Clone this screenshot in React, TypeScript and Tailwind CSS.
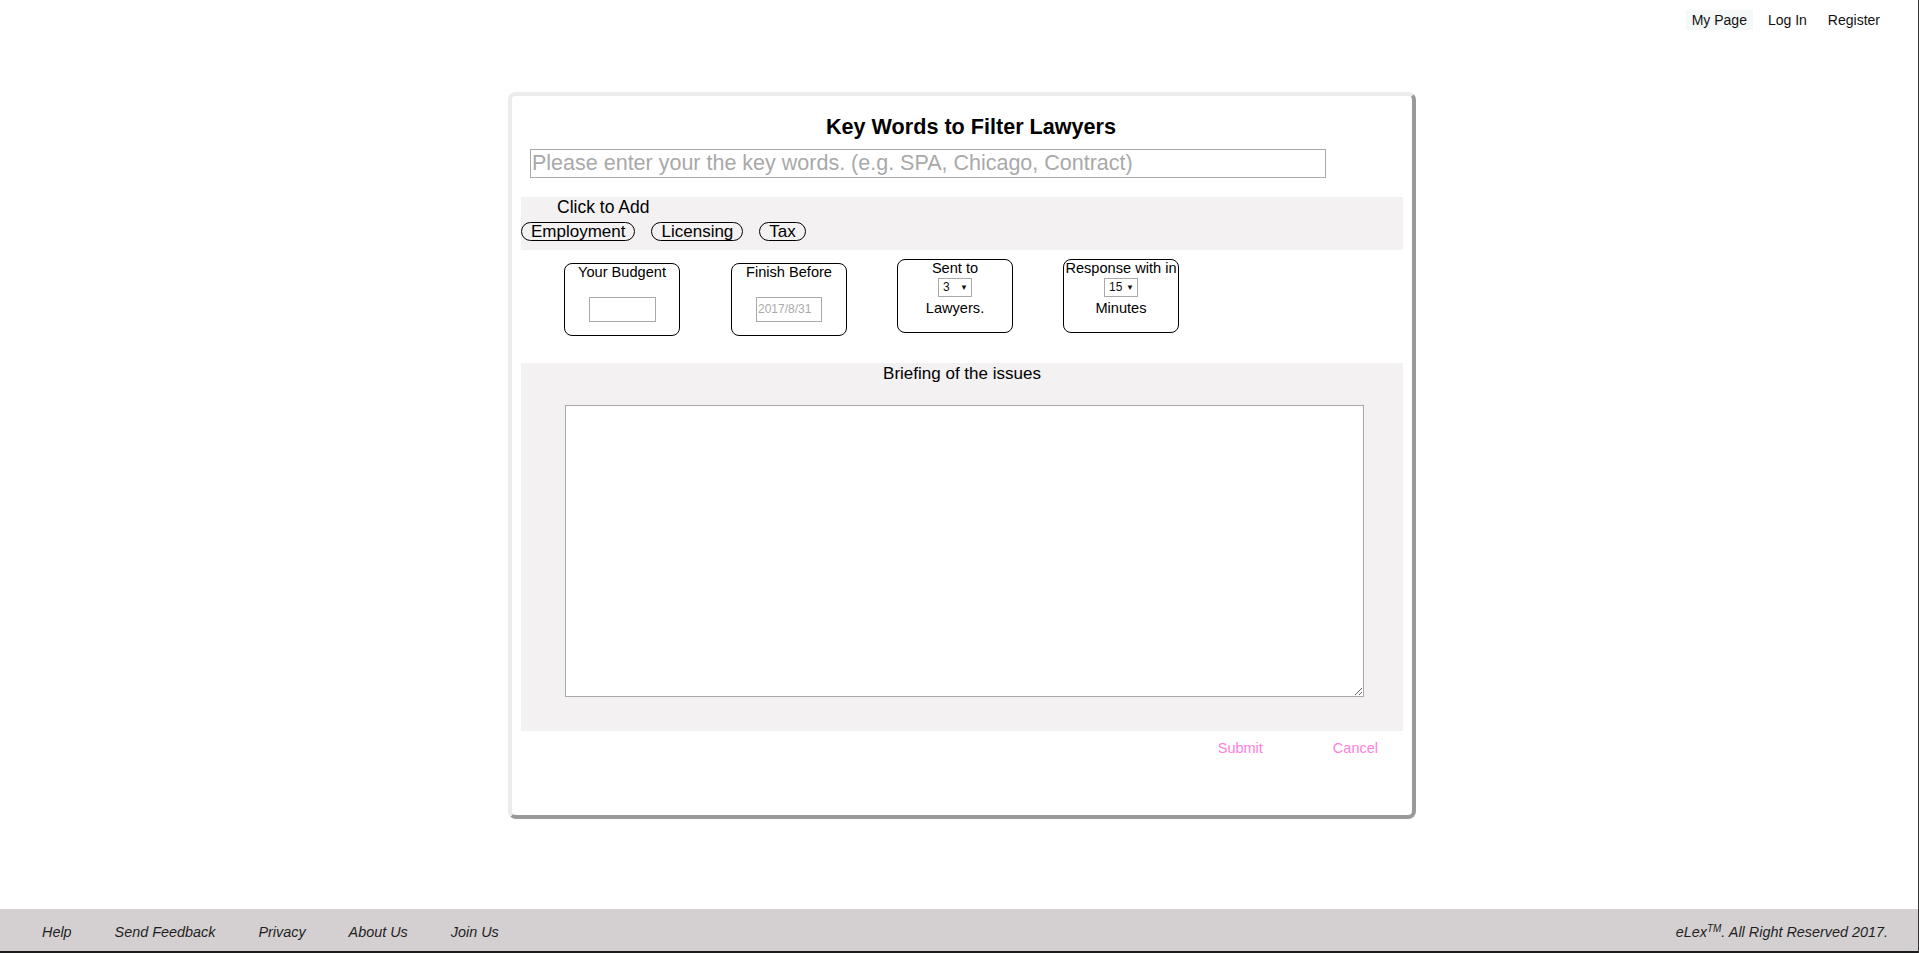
import React from "react";

function SelectBox({ value, w }: { value: string; w: string }) {
  return (
    <div
      className={`mx-auto flex h-[19px] ${w} items-center justify-between border border-[#a9a9a9] bg-white pl-[4px] pr-[3px] text-[12px] leading-[17px] text-[#111]`}
    >
      <span>{value}</span>
      <span className="text-[8px]">▼</span>
    </div>
  );
}

export default function App() {
  return (
    <div
      className="flex min-h-screen flex-col border-r border-[#333] bg-white text-black"
      style={{ fontFamily: '"Liberation Sans", Arial, sans-serif' }}
    >
      {/* top nav */}
      <div className="flex justify-end gap-[9px] pr-[32px] pt-[10px] text-[14px] leading-[20px] text-[#111]">
        <span className="bg-[#f4f8f6] px-[6px]">My Page</span>
        <span className="px-[6px]">Log In</span>
        <span className="px-[6px]">Register</span>
      </div>

      {/* card */}
      <div className="ml-[508px] mt-[62px] flex h-[727px] w-[908px] flex-col rounded-[8px] border-4 border-b-[#999] border-l-[#ececec] border-r-[#999] border-t-[#ececec]">
        <div className="pl-[18px] pt-[19px] text-center text-[21.6px] font-bold leading-[24px]">
          Key Words to Filter Lawyers
        </div>
        <input
          className="ml-[18px] mt-[10px] h-[29px] w-[796px] border border-[#a9a9a9] px-[1px] text-[21.5px] leading-[25px] outline-none placeholder:text-[#a9a9a9]"
          placeholder="Please enter your the key words. (e.g. SPA, Chicago, Contract)"
        />

        {/* click to add band */}
        <div className="ml-[9px] mt-[19px] w-[882px] bg-[#f3f1f2] pb-[9px]">
          <div className="pl-[36px] text-[17.5px] leading-[20px]">Click to Add</div>
          <div className="mt-[5px] flex gap-[16px]">
            <span className="rounded-full border border-black px-[9px] text-[17px] leading-[17px]">Employment</span>
            <span className="rounded-full border border-black px-[9px] text-[17px] leading-[17px]">Licensing</span>
            <span className="rounded-full border border-black px-[9px] text-[17px] leading-[17px]">Tax</span>
          </div>
        </div>

        {/* boxes row */}
        <div className="ml-[52px] mt-[9px] flex items-start gap-[50px] text-[14.6px] leading-[17px]">
          <div className="mt-[4px] flex h-[73px] w-[116px] flex-col items-center rounded-[8px] border border-black">
            <div className="whitespace-nowrap">Your Budgent</div>
            <div className="mt-[16px] h-[25px] w-[67px] border border-[#a9a9a9]" />
          </div>
          <div className="ml-[1px] mt-[4px] flex h-[73px] w-[116px] flex-col items-center rounded-[8px] border border-black">
            <div className="whitespace-nowrap">Finish Before</div>
            <div className="mt-[16px] flex h-[25px] w-[66px] items-center border border-[#a9a9a9] pl-[1px] text-[12px] text-[#aaa]">
              2017/8/31
            </div>
          </div>
          <div className="flex h-[74px] w-[116px] flex-col items-center rounded-[8px] border border-black">
            <div className="whitespace-nowrap">Sent to</div>
            <div className="mt-[1px]">
              <SelectBox value="3" w="w-[34px]" />
            </div>
            <div className="mt-[3px] whitespace-nowrap">Lawyers.</div>
          </div>
          <div className="flex h-[74px] w-[116px] flex-col items-center rounded-[8px] border border-black">
            <div className="whitespace-nowrap">Response with in</div>
            <div className="mt-[1px]">
              <SelectBox value="15" w="w-[34px]" />
            </div>
            <div className="mt-[3px] whitespace-nowrap">Minutes</div>
          </div>
        </div>

        {/* briefing band */}
        <div className="ml-[9px] mt-[27px] flex w-[882px] flex-col bg-[#f3f1f2] pb-[34px] pt-[1px]">
          <div className="text-center text-[17px] leading-[20px]">Briefing of the issues</div>
          <textarea className="ml-[44px] mt-[21px] h-[292px] w-[799px] border border-[#a9a9a9] bg-white outline-none" />
        </div>

        <div className="mt-[9px] flex justify-end gap-[70px] pr-[34px] text-[14.5px] leading-[17px] text-[#ff7fe0]">
          <span>Submit</span>
          <span>Cancel</span>
        </div>
      </div>

      {/* footer */}
      <div className="mt-auto flex h-[44px] items-start justify-between border-b-2 border-[#1c1c1c] bg-[#d4d0d1] pt-[15px] text-[14.4px] italic leading-[16px] text-[#1f1f1f]">
        <div className="flex gap-[43px] pl-[42px]">
          <span>Help</span>
          <span>Send Feedback</span>
          <span>Privacy</span>
          <span>About Us</span>
          <span>Join Us</span>
        </div>
        <div className="pr-[30px]">
          eLex<sup className="text-[10px]">TM</sup>. All Right Reserved 2017.
        </div>
      </div>
    </div>
  );
}
